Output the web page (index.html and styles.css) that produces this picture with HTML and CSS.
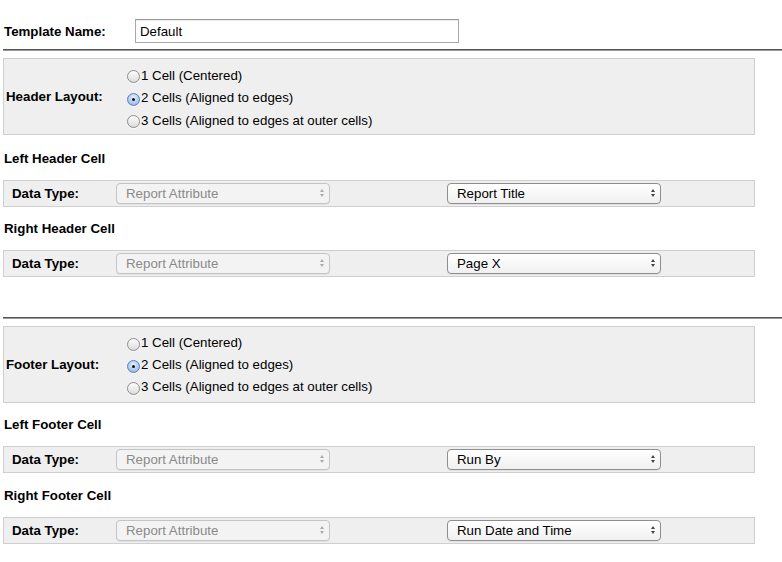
FILE: index.html
```html
<!DOCTYPE html>
<html>
<head>
<meta charset="utf-8">
<link rel="stylesheet" href="styles.css">
</head>
<body>
<div class="page">
  <div class="name-row">
    <span class="name-label">Template Name:</span>
    <div class="text-input">Default</div>
  </div>
  <div class="sep first"></div>

  <div class="layout-box">
    <span class="layout-label">Header Layout:</span>
    <div class="radios">
      <div class="radio-row"><span class="radio"></span>1 Cell (Centered)</div>
      <div class="radio-row"><span class="radio on"></span>2 Cells (Aligned to edges)</div>
      <div class="radio-row"><span class="radio"></span>3 Cells (Aligned to edges at outer cells)</div>
    </div>
  </div>

  <div class="cell-title t1">Left Header Cell</div>
  <div class="data-row">
    <span class="data-label">Data Type:</span>
    <div class="select disabled">Report Attribute<span class="arrows"><i class="up"></i><i class="down"></i></span></div>
    <div class="select second">Report Title<span class="arrows"><i class="up"></i><i class="down"></i></span></div>
  </div>

  <div class="cell-title">Right Header Cell</div>
  <div class="data-row">
    <span class="data-label">Data Type:</span>
    <div class="select disabled">Report Attribute<span class="arrows"><i class="up"></i><i class="down"></i></span></div>
    <div class="select second">Page X<span class="arrows"><i class="up"></i><i class="down"></i></span></div>
  </div>

  <div class="sep second-sep"></div>

  <div class="layout-box footer-box">
    <span class="layout-label">Footer Layout:</span>
    <div class="radios">
      <div class="radio-row"><span class="radio"></span>1 Cell (Centered)</div>
      <div class="radio-row"><span class="radio on"></span>2 Cells (Aligned to edges)</div>
      <div class="radio-row"><span class="radio"></span>3 Cells (Aligned to edges at outer cells)</div>
    </div>
  </div>

  <div class="cell-title">Left Footer Cell</div>
  <div class="data-row">
    <span class="data-label">Data Type:</span>
    <div class="select disabled">Report Attribute<span class="arrows"><i class="up"></i><i class="down"></i></span></div>
    <div class="select second">Run By<span class="arrows"><i class="up"></i><i class="down"></i></span></div>
  </div>

  <div class="cell-title t4">Right Footer Cell</div>
  <div class="data-row">
    <span class="data-label">Data Type:</span>
    <div class="select disabled">Report Attribute<span class="arrows"><i class="up"></i><i class="down"></i></span></div>
    <div class="select second">Run Date and Time<span class="arrows"><i class="up"></i><i class="down"></i></span></div>
  </div>
</div>
</body>
</html>
```
FILE: styles.css
```css
html, body {
  margin: 0;
  padding: 0;
  background: #fff;
}
body {
  font-family: "Liberation Sans", Arial, sans-serif;
  font-size: 13.3px;
  color: #000;
}
.page {
  display: flex;
  flex-direction: column;
  padding: 19px 0 0 3px;
}
.name-row {
  display: flex;
  align-items: center;
  height: 24px;
}
.name-label {
  font-weight: bold;
  width: 132px;
  padding-left: 1px;
  box-sizing: border-box;
}
.text-input {
  width: 324px;
  height: 24px;
  box-sizing: border-box;
  border: 1px solid #a8a8a8;
  border-top-color: #999;
  padding: 1px 0 0 4px;
  line-height: 22px;
  box-shadow: inset 0 1px 1px rgba(0,0,0,0.08);
}
.sep {
  height: 0;
  border-top: 1px solid #555;
  border-bottom: 1px solid #999;
}
.sep.first {
  margin-top: 6px;
}
.sep.second-sep {
  margin-top: 40px;
}
.layout-box {
  margin-top: 7px;
  width: 752px;
  height: 77px;
  box-sizing: border-box;
  border: 1px solid #cfcfcf;
  background: #efefef;
  display: flex;
  align-items: center;
  padding-left: 2px;
}
.layout-label {
  font-weight: bold;
  width: 121px;
}
.radios {
  display: flex;
  flex-direction: column;
  padding-top: 2px;
}
.footer-box .radios {
  padding-top: 0;
}
.radio-row {
  display: flex;
  align-items: center;
  height: 22.5px;
}
.footer-box .radio-row {
  height: 22px;
}
.radio {
  width: 13px;
  height: 13px;
  box-sizing: border-box;
  border-radius: 50%;
  border: 1px solid #8d8d8d;
  background: linear-gradient(#fdfdfd, #dcdcdc);
  margin-right: 1px;
  margin-top: 3px;
  display: flex;
  align-items: center;
  justify-content: center;
  box-shadow: 0 1px 0 rgba(255,255,255,0.6);
}
.radio.on {
  border-color: #5a7fb8;
  background: radial-gradient(circle at 50% 35%, #eaf3ff, #9cc1ef 70%, #7aa6e0);
}
.radio.on::after {
  content: "";
  width: 3px;
  height: 3px;
  border-radius: 50%;
  background: #111;
}
.cell-title {
  font-weight: bold;
  margin-top: 14px;
  height: 16px;
  line-height: 16px;
  padding-left: 1px;
}
.cell-title.t1 {
  margin-top: 16px;
}
.cell-title.t4 {
  margin-top: 15px;
}
.data-row {
  margin-top: 13px;
  width: 752px;
  height: 27px;
  box-sizing: border-box;
  border: 1px solid #cfcfcf;
  background: #efefef;
  display: flex;
  align-items: center;
  padding-left: 8px;
}
.data-label {
  font-weight: bold;
  width: 104px;
}
.select {
  position: relative;
  width: 214px;
  height: 21px;
  box-sizing: border-box;
  border: 1px solid #a5a5a5;
  border-radius: 4px;
  background: linear-gradient(#ffffff, #f0f0f0);
  padding-left: 9px;
  line-height: 19px;
  color: #000;
  box-shadow: 0 1px 0 rgba(0,0,0,0.05);
}
.select.disabled {
  color: #8a8a8a;
  border-color: #c4c4c4;
  background: #f3f3f3;
}
.select.second {
  margin-left: 117px;
  border-color: #8e8e8e;
}
.arrows {
  position: absolute;
  right: 5px;
  top: 5px;
  display: flex;
  flex-direction: column;
  gap: 2px;
}
.arrows i {
  display: block;
  width: 0;
  height: 0;
  border-left: 2.5px solid transparent;
  border-right: 2.5px solid transparent;
}
.arrows .up {
  border-bottom: 3px solid #444;
}
.arrows .down {
  border-top: 3px solid #444;
}
.select.disabled .arrows .up {
  border-bottom-color: #aaa;
}
.select.disabled .arrows .down {
  border-top-color: #aaa;
}
```
